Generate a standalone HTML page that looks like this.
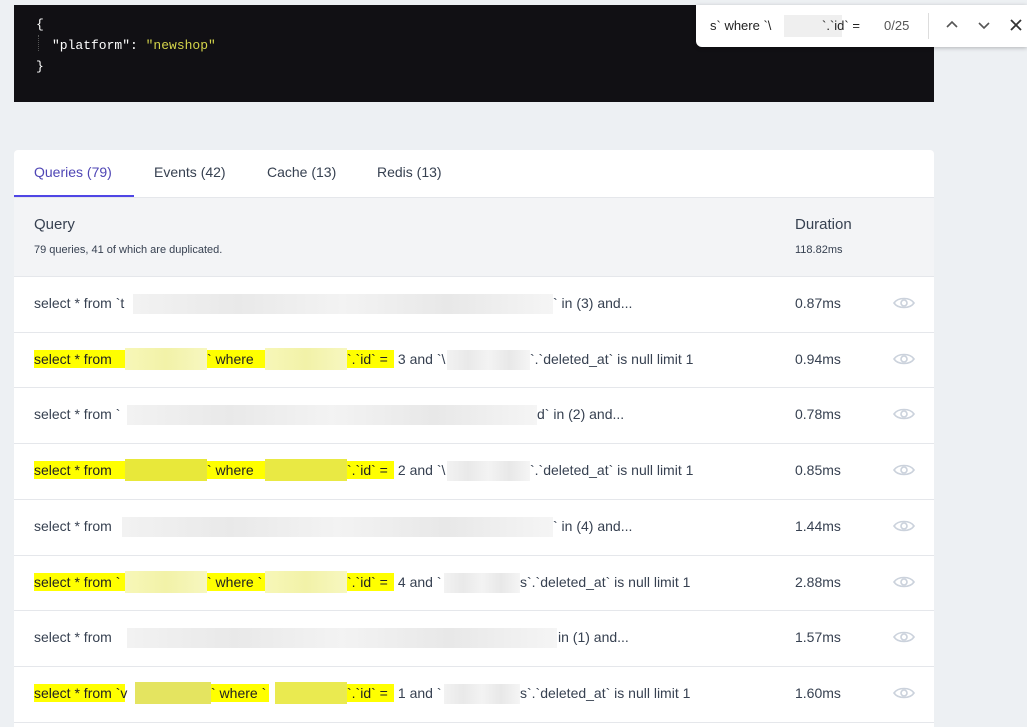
<!DOCTYPE html>
<html style="width:1027px;height:727px;overflow:hidden"><head><meta charset="utf-8"><style>
*{margin:0;padding:0;box-sizing:border-box}
body{width:1027px;height:727px;overflow:hidden;background:#edf0f3;font-family:"Liberation Sans",sans-serif;position:relative;color:#374151}
.code{position:absolute;left:14px;top:5px;width:920px;height:97px;background:#111014;font-family:"Liberation Mono",monospace;font-size:13px;color:#fff}
.code div{position:absolute;white-space:pre}
.find{position:absolute;left:696px;top:5px;width:331px;height:42px;background:#fff;border-radius:0 0 0 6px;box-shadow:0 1px 4px rgba(0,0,0,.25);font-size:13px;color:#222}
.card{position:absolute;left:14px;top:150px;width:920px;height:577px;background:#fff;border-radius:4px 4px 0 0;overflow:hidden}
.tab{position:absolute;top:14px;font-size:14px;color:#374151}
.a{position:absolute;font-size:14px;line-height:18px;white-space:pre}
.row{position:absolute;left:0;width:920px;height:56px;border-top:1px solid #e5e7eb}
.row .a{top:17px}
.y{background:#ffff00;color:#222}
.pb{position:absolute;top:15px;height:22px;background:linear-gradient(90deg,#f7f7b8,#f2f2a8,#f7f7c0)}
.gb{position:absolute;top:17px;height:20px;background:linear-gradient(90deg,#f2f2f2,#e9e9e9,#f3f3f3,#e8e8e8,#f5f5f5)}
.d{left:781px}
.eye{position:absolute;left:879px;top:19px}
</style></head><body>
<div class="code">
<div style="left:22px;top:12px">{</div>
<div style="left:24px;top:30px;width:1px;height:16px;border-left:1px dotted #555"></div>
<div style="left:38px;top:33px">"platform": <span style="color:#d4d44a">"newshop"</span></div>
<div style="left:22px;top:54px">}</div>
</div>
<div class="find">
<span style="position:absolute;left:14px;top:13px">s` where `\</span>
<span style="position:absolute;left:88px;top:10px;width:58px;height:22px;background:#efefef"></span>
<span style="position:absolute;left:126px;top:13px">`.`id` =</span>
<span style="position:absolute;left:188px;top:13px;color:#555">0/25</span>
<span style="position:absolute;left:232px;top:8px;width:1px;height:26px;background:#ddd"></span>
<svg style="position:absolute;left:250px;top:15px" width="12" height="10"><path d="M1 7 L6 2 L11 7" stroke="#555" stroke-width="1.6" fill="none"/></svg>
<svg style="position:absolute;left:282px;top:15px" width="12" height="10"><path d="M1 3 L6 8 L11 3" stroke="#555" stroke-width="1.6" fill="none"/></svg>
<svg style="position:absolute;left:314px;top:14px" width="12" height="12"><path d="M1 1 L11 11 M11 1 L1 11" stroke="#333" stroke-width="1.8"/></svg>
</div>
<div class="card">
<div class="tab" style="left:20px;color:#4f46b5">Queries (79)</div>
<div style="position:absolute;left:0;top:45px;width:120px;height:2px;background:#4f46e5"></div>
<div class="tab" style="left:140px">Events (42)</div>
<div class="tab" style="left:253px">Cache (13)</div>
<div class="tab" style="left:363px">Redis (13)</div>
<div style="position:absolute;left:0;top:47px;width:920px;height:80px;background:#f3f4f6;border-top:1px solid #e5e7eb">
<div class="a" style="left:20px;top:18px;font-size:15px">Query</div>
<div class="a" style="left:20px;top:43px;font-size:11px">79 queries, 41 of which are duplicated.</div>
<div class="a" style="left:781px;top:18px;font-size:15px">Duration</div>
<div class="a" style="left:781px;top:43px;font-size:11px">118.82ms</div>
</div>

<div class="row" style="top:126px"><span class="a" style="left:20px">select * from `t</span><span class="gb" style="left:119px;width:420px"></span><span class="a" style="left:539px">` in (3) and...</span><span class="a d">0.87ms</span>EYE</div>

<div class="row" style="top:182px"><span class="a y" style="left:20px;width:91px">select * from </span><span class="pb" style="left:111px;width:82px"></span><span class="a y" style="left:193px;width:58px">` where </span><span class="pb" style="left:251px;width:82px"></span><span class="a y" style="left:333px;width:47px">`.`id` =</span><span class="a" style="left:380px"> 3 and `\</span><span class="gb" style="left:433px;width:83px"></span><span class="a" style="left:516px">`.`deleted_at` is null limit 1</span><span class="a d">0.94ms</span>EYE</div>

<div class="row" style="top:237px"><span class="a" style="left:20px">select * from `</span><span class="gb" style="left:113px;width:410px"></span><span class="a" style="left:523px">d` in (2) and...</span><span class="a d">0.78ms</span>EYE</div>

<div class="row" style="top:293px"><span class="a y" style="left:20px;width:91px">select * from </span><span class="pb" style="left:111px;width:82px;background:#e8e83a"></span><span class="a y" style="left:193px;width:58px">` where </span><span class="pb" style="left:251px;width:82px;background:#e9e944"></span><span class="a y" style="left:333px;width:47px">`.`id` =</span><span class="a" style="left:380px"> 2 and `\</span><span class="gb" style="left:433px;width:83px"></span><span class="a" style="left:516px">`.`deleted_at` is null limit 1</span><span class="a d">0.85ms</span>EYE</div>

<div class="row" style="top:349px"><span class="a" style="left:20px">select * from</span><span class="gb" style="left:108px;width:431px"></span><span class="a" style="left:539px">` in (4) and...</span><span class="a d">1.44ms</span>EYE</div>

<div class="row" style="top:405px"><span class="a y" style="left:20px;width:91px">select * from `</span><span class="pb" style="left:111px;width:82px"></span><span class="a y" style="left:193px;width:58px">` where `</span><span class="pb" style="left:251px;width:82px"></span><span class="a y" style="left:333px;width:47px">`.`id` =</span><span class="a" style="left:380px"> 4 and `</span><span class="gb" style="left:430px;width:76px"></span><span class="a" style="left:506px">s`.`deleted_at` is null limit 1</span><span class="a d">2.88ms</span>EYE</div>

<div class="row" style="top:460px"><span class="a" style="left:20px">select * from</span><span class="gb" style="left:113px;width:430px"></span><span class="a" style="left:544px">in (1) and...</span><span class="a d">1.57ms</span>EYE</div>

<div class="row" style="top:516px;border-bottom:1px solid #e5e7eb;height:57px"><span class="a y" style="left:20px;width:91px">select * from `v</span><span class="pb" style="left:121px;width:76px;background:#e4e460"></span><span class="a y" style="left:197px;width:58px">` where `</span><span class="pb" style="left:261px;width:72px;background:#eaea50"></span><span class="a y" style="left:333px;width:47px">`.`id` =</span><span class="a" style="left:380px"> 1 and `</span><span class="gb" style="left:430px;width:76px"></span><span class="a" style="left:506px">s`.`deleted_at` is null limit 1</span><span class="a d">1.60ms</span>EYE</div>
</div>
<script>
var svg='<svg class="eye" width="22" height="14" viewBox="0 0 22 14"><path d="M1 7 C5 1 17 1 21 7 C17 13 5 13 1 7 Z" stroke="#cbd2dc" stroke-width="1.6" fill="none"/><circle cx="11" cy="7" r="3" stroke="#cbd2dc" stroke-width="1.6" fill="none"/></svg>';
document.querySelectorAll('.row').forEach(function(r){r.innerHTML=r.innerHTML.replace('EYE',svg);});
</script>
</body></html>
